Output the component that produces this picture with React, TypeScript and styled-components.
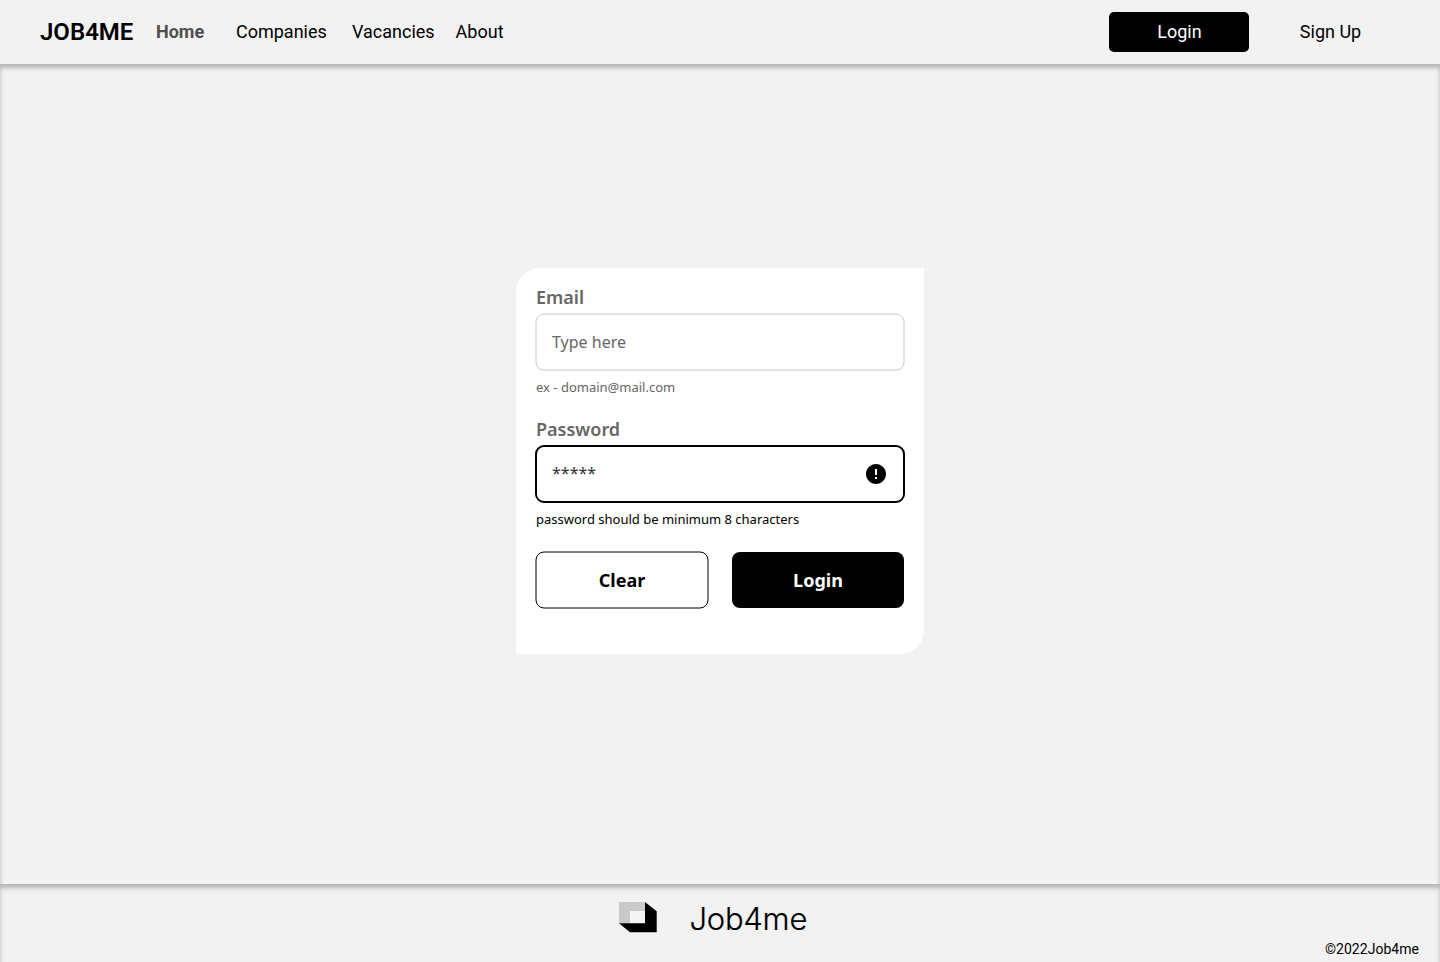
import React from "react";
import styled, { createGlobalStyle, css } from "styled-components";

const GlobalStyle = createGlobalStyle`
  *, *::before, *::after { box-sizing: border-box; }
  body { margin: 0; background: #f2f2f2; color: #000; font-family: Roboto, sans-serif; }
  button, input { font: inherit; color: inherit; }
`;

const Page = styled.div`
  display: flex;
  flex-direction: column;
  height: 962px;
  width: 1440px;
  overflow: hidden;
`;

const Header = styled.header`
  display: flex;
  align-items: center;
  justify-content: space-between;
  height: 64px;
  padding: 0 39px 0 40px;
`;

const Nav = styled.nav`
  display: flex;
  align-items: center;
`;

const Brand = styled.a`
  width: 116px;
  font-size: 24px;
  line-height: 28px;
  font-weight: 600;
`;

const NavLink = styled.a<{ $width: number; $active?: boolean }>`
  width: ${(p) => p.$width}px;
  font-size: 18px;
  line-height: 24px;
  white-space: nowrap;
  font-weight: ${(p) => (p.$active ? 700 : 400)};
  color: ${(p) => (p.$active ? "#4f4f4f" : "#000")};
`;

const Actions = styled.div`
  display: flex;
  gap: 12px;
`;

const HeaderButton = styled.button<{ $filled?: boolean }>`
  width: 140px;
  height: 40px;
  padding: ${(p) => (p.$filled ? "0 0 0 1px" : "0 1px 0 0")};
  border: 0;
  border-radius: 5px;
  font-size: 18px;
  line-height: 24px;
  background: ${(p) => (p.$filled ? "#000" : "transparent")};
  color: ${(p) => (p.$filled ? "#fff" : "#000")};
`;

const innerShadow = css`
  box-shadow: inset 0 4px 4px rgba(0, 0, 0, 0.25);
`;

const Main = styled.main`
  display: flex;
  justify-content: center;
  align-items: flex-start;
  height: 820px;
  padding-top: 204px;
  ${innerShadow}
`;

const Card = styled.form`
  display: flex;
  flex-direction: column;
  width: 408px;
  height: 386px;
  padding: 17px 20px;
  background: #fff;
  border-radius: 24px 0 24px 0;
  font-family: "Noto Sans", sans-serif;
`;

const Field = styled.div`
  height: 132px;
`;

const Label = styled.label`
  display: block;
  height: 29px;
  font-size: 18px;
  line-height: 24px;
  font-weight: 600;
  color: #666;
`;

/* Outline centred on the edge of its box, half of its width to each side. */
const outline = (color: string, width: number) => css`
  &::before {
    content: "";
    position: absolute;
    top: 0;
    left: 0;
    width: calc(100% + ${width}px);
    height: calc(100% + ${width}px);
    border: ${width}px solid ${color};
    border-radius: ${8 + width / 2}px;
    transform: translate(${-width / 2}px, ${-width / 2}px);
    pointer-events: none;
  }
`;

const InputBox = styled.div<{ $error?: boolean }>`
  position: relative;
  display: flex;
  align-items: center;
  height: 56px;
  padding: 0 16px;
  border-radius: 8px;
  ${(p) => (p.$error ? outline("#000", 2) : outline("#c8c8c8", 1))}
`;

const Input = styled.input<{ $dark?: boolean }>`
  flex: 1;
  min-width: 0;
  height: ${(p) => (p.$dark ? 26 : 24)}px;
  padding: ${(p) => (p.$dark ? "0 0 2px" : "0")};
  border: 0;
  outline: 0;
  background: transparent;
  font-size: 16px;
  line-height: 24px;
  color: ${(p) => (p.$dark ? "#333" : "#666")};
  &::placeholder { color: #666; opacity: 1; }
`;

const Hint = styled.div<{ $error?: boolean }>`
  margin-top: 7px;
  font-size: 13px;
  line-height: 20px;
  color: ${(p) => (p.$error ? "#000" : "#666")};
`;

const Buttons = styled.div`
  display: flex;
  gap: 24px;
  margin-top: 3px;
`;

const FormButton = styled.button<{ $filled?: boolean }>`
  position: relative;
  width: 172px;
  height: 56px;
  padding: 0;
  border: 0;
  border-radius: 8px;
  font-size: 18px;
  line-height: 24px;
  font-weight: 700;
  background: ${(p) => (p.$filled ? "#000" : "#fff")};
  color: ${(p) => (p.$filled ? "#fff" : "#000")};
  ${(p) => !p.$filled && outline("#000", 1)}
`;

const ErrorIcon = styled.svg`
  display: block;
  width: 24px;
  height: 24px;
`;

const Footer = styled.footer`
  display: flex;
  flex-direction: column;
  height: 78px;
  padding: 18px 21px 0 0;
  ${innerShadow}
`;

const FooterBrand = styled.div`
  display: flex;
  height: 35px;
  padding-left: 619px;
`;

const Wordmark = styled.span`
  margin-left: 32.5px;
  font-family: Inter, sans-serif;
  font-weight: 300;
  font-size: 31px;
  line-height: 34px;
  letter-spacing: -0.25px;
  -webkit-text-stroke: 0.2px #000;
`;

const Copyright = styled.small`
  align-self: flex-end;
  margin-top: 2px;
  font-size: 14px;
  line-height: 20px;
  letter-spacing: 0.03px;
`;

const Cube = () => (
  <svg width="38" height="31" viewBox="0 0 38 31">
    <path fill="#c9c9c9" d="M0 0h26v21.2H0z" />
    <path fill="#f4f4f4" d="M11 9h15v12H11z" />
    <path d="M26 0l11.7 9.2v21.1H11L0 21.2h26z" />
  </svg>
);

export default function App() {
  return (
    <Page>
      <GlobalStyle />
      <Header>
        <Nav>
          <Brand>JOB4ME</Brand>
          <NavLink $width={80} $active>Home</NavLink>
          <NavLink $width={116}>Companies</NavLink>
          <NavLink $width={103.6}>Vacancies</NavLink>
          <NavLink $width={60}>About</NavLink>
        </Nav>
        <Actions>
          <HeaderButton $filled>Login</HeaderButton>
          <HeaderButton>Sign Up</HeaderButton>
        </Actions>
      </Header>
      <Main>
        <Card>
          <Field>
            <Label htmlFor="email">Email</Label>
            <InputBox>
              <Input id="email" placeholder="Type here" />
            </InputBox>
            <Hint>ex - domain@mail.com</Hint>
          </Field>
          <Field>
            <Label htmlFor="password">Password</Label>
            <InputBox $error>
              <Input id="password" defaultValue="*****" $dark />
              <ErrorIcon viewBox="0 0 24 24">
                <path d="M12 2C6.48 2 2 6.48 2 12s4.48 10 10 10 10-4.48 10-10S17.52 2 12 2zm1 15h-2v-2h2v2zm0-4h-2V7h2v6z" />
              </ErrorIcon>
            </InputBox>
            <Hint $error>password should be minimum 8 characters</Hint>
          </Field>
          <Buttons>
            <FormButton type="button">Clear</FormButton>
            <FormButton type="button" $filled>Login</FormButton>
          </Buttons>
        </Card>
      </Main>
      <Footer>
        <FooterBrand>
          <Cube />
          <Wordmark>Job4me</Wordmark>
        </FooterBrand>
        <Copyright>©2022Job4me</Copyright>
      </Footer>
    </Page>
  );
}
